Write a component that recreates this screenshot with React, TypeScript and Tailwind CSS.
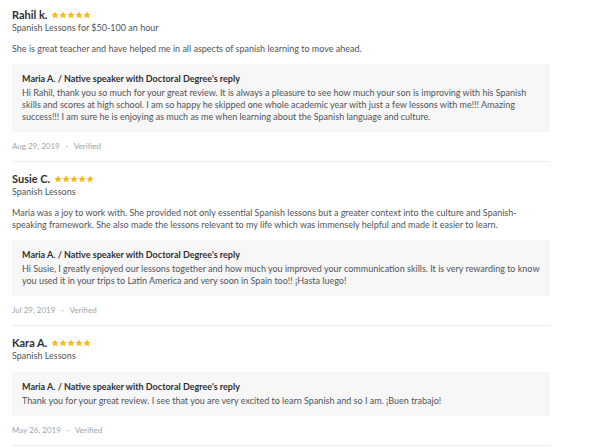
const reviews = [
  {
    name: "Rahil k.",
    subtitle: "Spanish Lessons for $50-100 an hour",
    body: "She is great teacher and have helped me in all aspects of spanish learning to move ahead.",
    reply:
      "Hi Rahil, thank you so much for your great review. It is always a pleasure to see how much your son is improving with his Spanish skills and scores at high school. I am so happy he skipped one whole academic year with just a few lessons with me!!! Amazing success!!! I am sure he is enjoying as much as me when learning about the Spanish language and culture.",
    date: "Aug 29, 2019",
  },
  {
    name: "Susie C.",
    subtitle: "Spanish Lessons",
    body: "Maria was a joy to work with. She provided not only essential Spanish lessons but a greater context into the culture and Spanish-speaking framework. She also made the lessons relevant to my life which was immensely helpful and made it easier to learn.",
    reply:
      "Hi Susie, I greatly enjoyed our lessons together and how much you improved your communication skills. It is very rewarding to know you used it in your trips to Latin America and very soon in Spain too!! ¡Hasta luego!",
    date: "Jul 29, 2019",
  },
  {
    name: "Kara A.",
    subtitle: "Spanish Lessons",
    body: "",
    reply:
      "Thank you for your great review. I see that you are very excited to learn Spanish and so I am. ¡Buen trabajo!",
    date: "May 26, 2019",
  },
];

function Stars() {
  return (
    <div className="flex items-center ml-[4px]">
      {[0, 1, 2, 3, 4].map((i) => (
        <svg key={i} width="8" height="8" viewBox="0 0 24 24">
          <path
            d="M12 1.5l3.2 6.8 7.3.9-5.4 5.1 1.4 7.3L12 18l-6.5 3.6 1.4-7.3L1.5 9.2l7.3-.9z"
            fill="#fdb813"
          />
        </svg>
      ))}
    </div>
  );
}

export default function App() {
  return (
    <div
      className="w-[600px] h-[448px] overflow-hidden bg-white pl-3"
      style={{ fontFamily: 'Lato, sans-serif' }}
    >
      <div className="w-[538px] -mt-[2px]">
        {reviews.map((r) => (
          <div key={r.name} className="pt-[9px] pb-[9px] border-b border-[#eceeef]">
            <div className="flex items-center h-[15px]">
              <span className="text-[11px] font-bold text-[#2f3033] leading-[15px]">
                {r.name}
              </span>
              <Stars />
            </div>
            <div className="text-[9px] leading-[12px] text-[#50555a]">{r.subtitle}</div>
            {r.body && (
              <p className="mt-[9px] text-[9px] leading-[12px] text-[#50555a]">{r.body}</p>
            )}
            <div
              className={
                r.body
                  ? "mt-[9px] bg-[#f7f7f7] px-[10px] pt-[9px] pb-[9px]"
                  : "mt-[10px] bg-[#f7f7f7] px-[10px] pt-[9px] pb-[9px]"
              }
            >
              <div className="text-[9px] leading-[12px] font-bold text-[#2f3033]">
                Maria A. / Native speaker with Doctoral Degree's reply
              </div>
              <p className="mt-[2px] text-[9px] leading-[12px] text-[#50555a]">{r.reply}</p>
            </div>
            <div className="mt-2 text-[8px] leading-[12px] text-[#a0a5a9] flex items-center">
              <span>{r.date}</span>
              <span className="mx-[6px]">·</span>
              <span>Verified</span>
            </div>
          </div>
        ))}
      </div>
    </div>
  );
}
